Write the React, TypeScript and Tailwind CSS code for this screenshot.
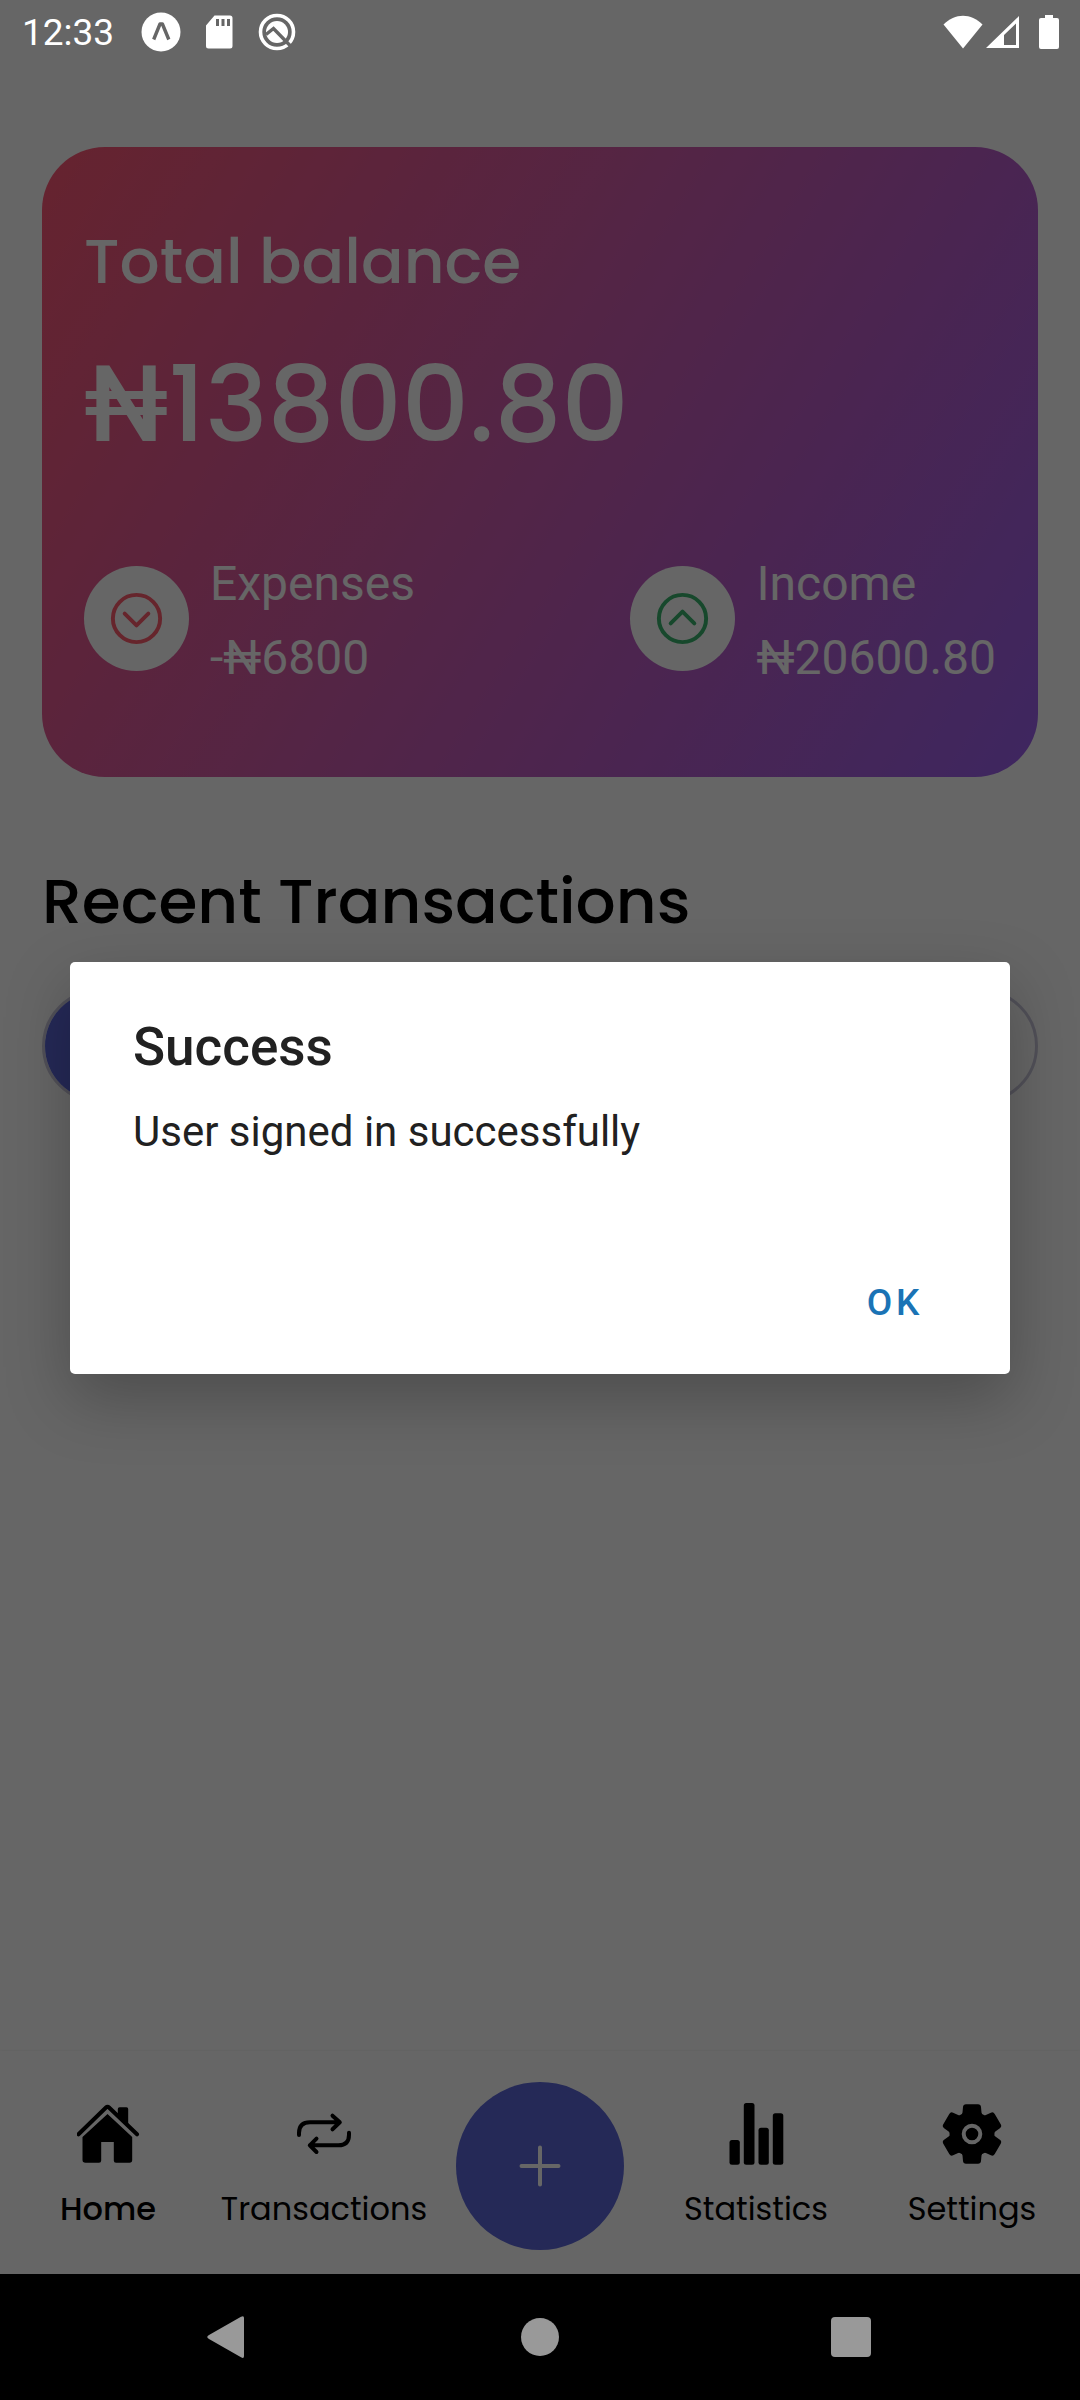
import type { ReactNode } from "react";

const poppins = "font-['Poppins','Inter',sans-serif]";

function StatusBar() {
  return (
    <header className="absolute inset-x-0 top-0 z-20 flex h-16 items-center justify-between pl-[22px] pr-[19px] text-white">
      <div className="flex items-center">
        <time className="w-[119px] text-[37px] leading-none">12:33</time>
        <svg className="size-10" viewBox="0 0 40 40" aria-hidden="true">
          <circle cx="20" cy="20" r="19.5" fill="#fff" />
          <path d="M12.7 27.5 19 12h2.4l6.4 15.5" fill="none" stroke="#666" strokeWidth="3.4" strokeLinejoin="round" />
        </svg>
        <svg className="ml-6 h-9 w-7" viewBox="0 0 28 36" aria-hidden="true">
          <path d="M9.5 1.5H25a2.500 2.500 0 0 1 2.500 2.500v28a2.500 2.500 0 0 1-2.500 2.500H3.500A2.500 2.500 0 0 1 1 32V11.500Z" fill="#fff" />
          <path d="M12.500 5v7M18 5v7M23.500 5v7" stroke="#666" strokeWidth="3" />
        </svg>
        <svg className="ml-6 size-10" viewBox="0 0 40 40" aria-hidden="true">
          <circle cx="20" cy="20" r="16.500" fill="none" stroke="#fff" strokeWidth="3.600" />
          <circle cx="20" cy="20" r="11" fill="#fff" />
          <path d="M9 22.500 16.500 16.500 33.500 34" fill="none" stroke="#666" strokeWidth="3.400" />
        </svg>
      </div>
      <div className="flex items-center">
        <svg className="h-9 w-10" viewBox="0 0 40 36" aria-hidden="true">
          <path d="M.5 10.500C12-1.300 28-1.300 39.500 10.500L20 34.500Z" fill="#fff" />
        </svg>
        <svg className="ml-0.5 h-9 w-9" viewBox="0 0 36 36" aria-hidden="true">
          <path d="M34 2v32H1ZM31 9.500 19 21v10h12Z" fill="#fff" fillRule="evenodd" />
        </svg>
        <svg className="ml-4 h-9 w-6" viewBox="0 0 24 36" aria-hidden="true">
          <path d="M8 1h8v3h4a2 2 0 0 1 2 2v27a2 2 0 0 1-2 2H4a2 2 0 0 1-2-2V6a2 2 0 0 1 2-2h4Z" fill="#fff" />
        </svg>
      </div>
    </header>
  );
}

function Amount({ label, value, color, points }: { label: string; value: string; color: string; points: string }) {
  return (
    <div className="flex items-center gap-[21px]">
      <span className="flex size-[105px] items-center justify-center rounded-full bg-white">
        <svg className="size-[63px]" viewBox="0 0 512 512" fill="none" stroke={color} strokeWidth="32" strokeLinecap="round" strokeLinejoin="round" aria-hidden="true">
          <circle cx="256" cy="256" r="192" />
          <polyline points={points} />
        </svg>
      </span>
      <dl className="pt-1.5 text-[48px] leading-[56px]">
        <dt>{label}</dt>
        <dd className="mt-[18px]">{value}</dd>
      </dl>
    </div>
  );
}

function BalanceCard() {
  return (
    <section className="rounded-[63px] bg-[linear-gradient(122deg,#ff5975,#9b60f0)] px-[42px] pt-[74px] pb-[91px] text-white">
      <h1 className={`${poppins} text-[63px] leading-[80px] font-medium`}>Total balance</h1>
      <p className={`${poppins} mt-5 text-[105px] leading-[168px] font-medium`}>
        <span className="font-['Roboto',sans-serif]">₦</span>13800.80
      </p>
      <div className="mt-[60px] flex justify-between">
        <Amount label="Expenses" value="-₦6800" color="#ff5c6e" points="352 216 256 312 160 216" />
        <Amount label="Income" value="₦20600.80" color="#3ab56f" points="352 296 256 200 160 296" />
      </div>
    </section>
  );
}

function NavItem({ label, active, children }: { label: string; active?: boolean; children: ReactNode }) {
  return (
    <a href="#" className="flex flex-1 flex-col items-center gap-[19px] pt-[52px]">
      <svg className="size-[63px]" viewBox="0.5 0 63 63" aria-hidden="true">{children}</svg>
      <span className={active ? "font-medium" : "font-normal"}>{label}</span>
    </a>
  );
}

function TabBar() {
  return (
    <nav className={`${poppins} flex h-[223px] bg-white text-[32px] leading-[48px] text-black shadow-[0_0_3px_rgba(0,0,0,0.08)]`}>
      <NavItem label="Home" active>
        <path d="M2 31.300 29.500 4.500Q31 3 32.500 4.500L60.500 31.300" fill="none" stroke="#000" strokeWidth="4" strokeLinecap="round" />
        <path d="M41.300 12V6q0-1.700 1.700-1.700h7q1.700 0 1.700 1.700v16Z" />
        <path d="M31 11 55.700 34v23q0 2.700-2.700 2.700H39.500q-2.200 0-2.200-2.200V39H24.700v18.500q0 2.200-2.200 2.200H9Q6 59.700 6 57V34Z" />
      </NavItem>
      <NavItem label="Transactions">
        <g fill="none" stroke="#000" strokeWidth="4" strokeLinecap="round" strokeLinejoin="round">
          <path d="M6.500 32v-2q0-10.700 11-10.700H47M40 12.700l7.300 6.600-7.300 7" />
          <path d="M56.500 29.700v2q0 10.600-10.500 10.600H17.300M24 35.700l-6.700 6.600L24 49" />
        </g>
      </NavItem>
      <div className="flex flex-1 items-start justify-center pt-[31px]">
        <button type="button" aria-label="Add transaction" className="flex size-[168px] items-center justify-center rounded-full bg-[#5c67d9]">
          <svg className="size-16" viewBox="0 0 64 64" stroke="#fff" strokeWidth="4" strokeLinecap="round" aria-hidden="true">
            <path d="M32 13.500v37M13.500 32h37" />
          </svg>
        </button>
      </div>
      <NavItem label="Statistics">
        <rect x="5" y="37" width="10.300" height="24.700" rx="2.500" />
        <rect x="19.300" y="0" width="10.700" height="61.700" rx="2.500" />
        <rect x="34" y="24.700" width="10.300" height="37" rx="2.500" />
        <rect x="48.300" y="10.300" width="10.500" height="51.400" rx="2.500" />
      </NavItem>
      <NavItem label="Settings">
        <g transform="translate(31.500 31)">
          <circle r="22.500" />
          {[0, 60, 120, 180, 240, 300].map((angle) => (
            <path key={angle} transform={`rotate(${angle})`} d="M-12.500-17Q-9.800-18.500-9.500-21.500L-9-27Q-8.700-29.700-6-29.700H6Q8.700-29.700 9-27L9.500-21.500Q9.800-18.500 12.500-17Z" />
          ))}
          <circle r="8.300" fill="none" stroke="#fff" strokeWidth="4" />
        </g>
      </NavItem>
    </nav>
  );
}

function SystemBar() {
  return (
    <footer className="relative z-20 flex h-[126px] items-center justify-around bg-black px-[74px]">
      <button type="button" aria-label="Back">
        <svg className="size-12" viewBox="0 0 48 48" aria-hidden="true">
          <path d="M4 22 36 3.800Q39 2 39 5v38q0 3-3 1.200L4 26q-3.500-2 0-4Z" fill="#999" />
        </svg>
      </button>
      <button type="button" aria-label="Home" className="flex size-12 items-center justify-center">
        <span className="size-[38px] rounded-full bg-[#999]" />
      </button>
      <button type="button" aria-label="Recent apps" className="flex size-12 items-center justify-center">
        <span className="size-10 rounded bg-[#999]" />
      </button>
    </footer>
  );
}

function SuccessDialog() {
  return (
    <div className="absolute inset-0 z-10 flex items-center bg-black/60 px-[70px]">
      <div
        role="alertdialog"
        aria-labelledby="dialog-title"
        aria-describedby="dialog-message"
        className="mb-16 w-full rounded-[5px] bg-white px-[63px] pt-[50px] pb-2 text-[#212121] shadow-[0_24px_64px_rgba(0,0,0,0.25)]"
      >
        <h2 id="dialog-title" className="text-[53px] leading-[70px] font-medium">Success</h2>
        <p id="dialog-message" className="mt-[22px] text-[42px] leading-[56px]">User signed in successfully</p>
        <div className="mt-20 flex justify-end">
          <button type="button" className="px-6 py-[38px] text-[37px] leading-[50px] font-medium tracking-widest text-[#1a73b5]">OK</button>
        </div>
      </div>
    </div>
  );
}

export default function App() {
  return (
    <div className="relative flex min-h-screen flex-col bg-white font-['Roboto',sans-serif]">
      <StatusBar />
      <main className="flex-1 px-[42px] pt-[147px]">
        <BalanceCard />
        <h2 className={`${poppins} mt-[84px] text-[63px] leading-[80px] font-medium text-black`}>Recent Transactions</h2>
        <div className="mt-12 flex h-[114px] rounded-full border-3 border-[#cbc9dd]">
          <button type="button" aria-label="Expenses" className="flex-1 rounded-full bg-[#5c67d9]" />
          <button type="button" aria-label="Income" className="flex-1 rounded-full" />
        </div>
      </main>
      <TabBar />
      <SystemBar />
      <SuccessDialog />
    </div>
  );
}
